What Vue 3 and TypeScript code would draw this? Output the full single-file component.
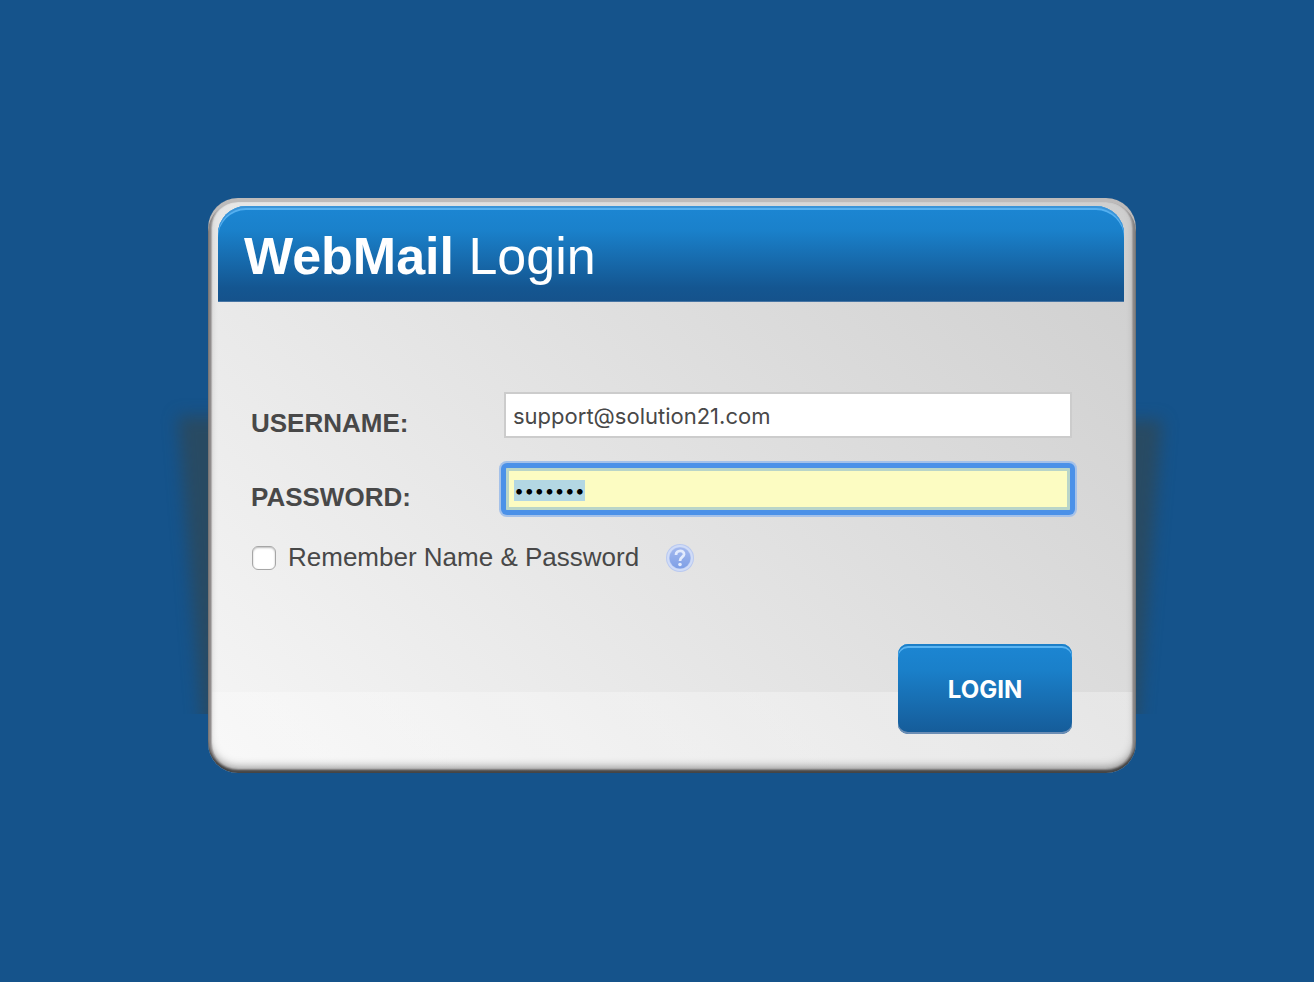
<script setup lang="ts">
import { onMounted, ref } from 'vue'

const username = ref('support@solution21.com')
const password = ref('webmail')
const remember = ref(false)
const passwordField = ref<HTMLInputElement | null>(null)

onMounted(() => {
  passwordField.value?.focus()
  passwordField.value?.select()
})
</script>

<template>
  <main class="page">
    <div class="frame">
      <svg class="shade shade-left" viewBox="0 0 60 344" aria-hidden="true">
        <defs>
          <filter id="soften" x="-50%" y="-20%" width="200%" height="140%" color-interpolation-filters="sRGB">
            <feGaussianBlur stdDeviation="8" />
          </filter>
        </defs>
        <path d="M30 46 H90 V400 H58 Z" fill="#364448" fill-opacity="0.6" filter="url(#soften)" />
      </svg>
      <svg class="shade shade-right" viewBox="0 0 60 344" aria-hidden="true">
        <path d="M34 50 H90 V400 H62 Z" fill="#364448" fill-opacity="0.6" filter="url(#soften)" />
      </svg>

      <form class="card" @submit.prevent>
        <header class="banner">
          <h1 class="title"><strong>WebMail</strong> Login</h1>
        </header>

        <div class="fields">
          <label class="name" for="username">USERNAME:</label>
          <input id="username" v-model="username" class="field" type="text" />
          <label class="name" for="password">PASSWORD:</label>
          <input id="password" ref="passwordField" v-model="password" class="field secret" type="password" />
        </div>

        <div class="remember">
          <input id="remember" v-model="remember" class="tick" type="checkbox" />
          <label for="remember">Remember Name &amp; Password</label>
          <button class="help" type="button" aria-label="Help">
            <svg viewBox="0 0 28 28" aria-hidden="true">
              <defs>
                <linearGradient id="orb" x1="0" y1="0" x2="0" y2="1">
                  <stop offset="0" stop-color="#a3b8ee" />
                  <stop offset="1" stop-color="#7e9fe6" />
                </linearGradient>
              </defs>
              <circle cx="14" cy="14" r="14" fill="#b9c9f0" />
              <circle cx="14" cy="14" r="12" fill="none" stroke="#d0dcf8" stroke-width="2" />
              <circle cx="14" cy="14" r="10.500" fill="url(#orb)" />
              <path d="M10 11 C10 5.500 18.500 5.500 18 10.500 C17.500 13.500 14 13 14 17" fill="none" stroke="#e3ebfd" stroke-width="2.800" />
              <circle cx="14" cy="20.500" r="1.800" fill="#e3ebfd" />
            </svg>
          </button>
        </div>

        <div class="actions">
          <button class="login" type="submit">LOGIN</button>
        </div>
      </form>
    </div>
  </main>
</template>

<style>
body {
  margin: 0;
  background: #15538b;
}
</style>

<style scoped>
.page {
  box-sizing: border-box;
  min-height: 100vh;
  padding: 198px 20px 60px 50px;
  background: #15538b;
  color: #484848;
  font-family: "Liberation Sans", Arial, sans-serif;
}

.frame {
  position: relative;
  max-width: 928px;
  margin: 0 auto;
}

.shade {
  position: absolute;
  bottom: 59px;
  width: 60px;
  height: 344px;
  overflow: hidden;
}

.shade-left {
  right: 100%;
}

.shade-right {
  left: 100%;
  transform: scaleX(-1);
}

.card {
  position: relative;
  box-sizing: border-box;
  padding: 8px 12px 39px 10px;
  border-radius: 30px;
  background:
    linear-gradient(to top, rgba(255, 255, 255, 0.3) 81px, transparent 81px),
    linear-gradient(45deg, #f6f6f6, #cecece);
  box-shadow:
    inset 0 4px 0 #bdbbbb,
    inset 0 -3px 2px rgba(50, 50, 50, 0.8),
    inset 3px 0 1px #8e8a8a,
    inset -3px 0 1px #8a8888,
    inset 0 0 1px 4px rgba(140, 136, 136, 0.5),
    inset 0 -6px 8px rgba(60, 60, 60, 0.5);
}

.banner {
  box-sizing: border-box;
  height: 96px;
  padding: 20px 26px;
  border-radius: 28px 28px 0 0;
  background: linear-gradient(#1c86d3, #1a81cb 25%, #145691 85%, #15528b);
  box-shadow:
    inset 0 2px 0 #3a94d8,
    inset 0 4px 0 #55b0f0,
    inset 0 -1px 0 #4775a4;
}

.title {
  margin: 0;
  color: #fff;
  font-size: 52px;
  font-weight: 400;
  line-height: 60px;
}

.fields {
  display: grid;
  grid-template-columns: 253px 1fr;
  row-gap: 28px;
  padding: 90px 52px 0 33px;
}

.name {
  padding-top: 8px;
  font-size: 26px;
  font-weight: 700;
  line-height: 46px;
  height: 46px;
  box-sizing: border-box;
}

.field {
  box-sizing: border-box;
  width: 100%;
  min-width: 0;
  height: 46px;
  padding: 2px 7px 0;
  border: 2px solid #ccc;
  border-radius: 0;
  outline: none;
  background: #fff;
  color: #484848;
  font-family: Inter, sans-serif;
  font-size: 22px;
  line-height: 26px;
}

.secret {
  padding: 2px 8px 0;
  background: #fcfcc2;
  color: #000;
  font-size: 18px;
}

.secret:focus {
  border-color: #4b91e8;
  border-radius: 3px;
  box-shadow:
    inset 0 0 0 3px #b9d5c8,
    0 0 0 3px #4b91e8,
    0 0 0 5px #a4c1e9;
}

.secret::selection {
  background: #b3d7e3;
  color: #000;
}

.remember {
  display: flex;
  align-items: center;
  height: 30px;
  padding: 31px 34px 0;
  font-size: 26px;
  line-height: 28px;
}

.remember label {
  padding-bottom: 2px;
}

.tick {
  width: 24px;
  height: 24px;
  margin: 0 12px 0 0;
  border: 1px solid #a6a6a6;
  border-radius: 6px;
  background: #fff;
  box-shadow: inset 0 1px 2px #bbb;
  appearance: none;
}

.tick:checked {
  background: #1a81cb;
}

.help {
  width: 28px;
  height: 28px;
  margin-left: 27px;
  padding: 0;
  border: 0;
  border-radius: 50%;
  background: none;
}

.help svg {
  display: block;
  width: 28px;
  height: 28px;
}

.actions {
  display: flex;
  justify-content: flex-end;
  padding: 71px 52px 0 0;
}

.login {
  width: 174px;
  height: 90px;
  padding: 0;
  border: 0;
  border-radius: 10px;
  background: linear-gradient(#1c86d3, #1a80ca 28%, #155b98);
  box-shadow:
    inset 0 2px 0 #1c7fc8,
    inset 0 4px 0 #5ab4f2,
    inset 0 -2px 0 #6b8db4;
  color: #fff;
  font-family: Inter, sans-serif;
  font-size: 24px;
  font-weight: 700;
}
</style>
